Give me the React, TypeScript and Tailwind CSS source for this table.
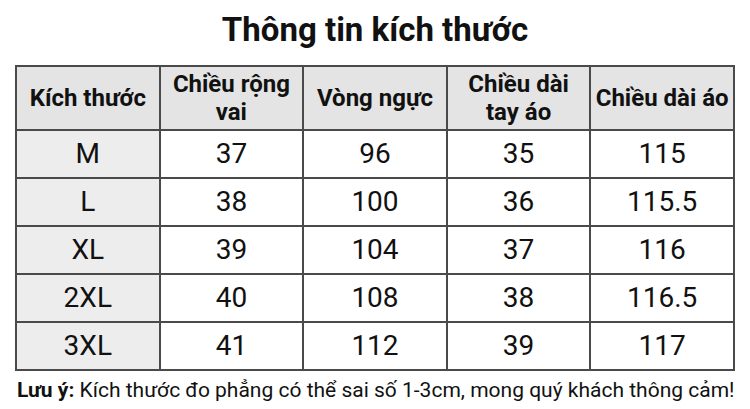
import React from "react";

const rows = [
  ["M", "37", "96", "35", "115"],
  ["L", "38", "100", "36", "115.5"],
  ["XL", "39", "104", "37", "116"],
  ["2XL", "40", "108", "38", "116.5"],
  ["3XL", "41", "112", "39", "117"],
];

const headers = ["Kích thước", "Chiều rộng\nvai", "Vòng ngực", "Chiều dài\ntay áo", "Chiều dài áo"];

export default function App() {
  return (
    <div
      className="w-[750px] h-[409px] bg-white text-[#111] overflow-hidden"
      style={{ fontFamily: "Roboto, 'Noto Sans', sans-serif" }}
    >
      <div className="h-[65px] flex justify-center pt-[10px]">
        <h1 className="text-[33px] font-bold leading-[40px]">Thông tin kích thước</h1>
      </div>
      <div className="px-[15px]">
        <table className="w-[720px] border-collapse table-fixed">
          <thead>
            <tr className="h-[64px] bg-[#e4e4e4]">
              {headers.map((h, i) => (
                <th
                  key={i}
                  className="border-2 border-[#4a4a4a] text-[24px] font-bold leading-[28px] whitespace-pre-line text-center align-middle p-0"
                >
                  {h}
                </th>
              ))}
            </tr>
          </thead>
          <tbody>
            {rows.map((r, ri) => (
              <tr key={ri} className="h-[48px]">
                {r.map((c, ci) => (
                  <td
                    key={ci}
                    className={`border-2 border-[#4a4a4a] text-[28px] leading-[32px] text-center align-middle p-0 ${
                      ci === 0 ? "bg-[#ededed]" : "bg-white"
                    }`}
                  >
                    {c}
                  </td>
                ))}
              </tr>
            ))}
          </tbody>
        </table>
      </div>
      <div className="pl-[17px] pt-[6px] text-[21px] leading-[26px] whitespace-nowrap">
        <span className="font-bold">Lưu ý:</span> Kích thước đo phẳng có thể sai số 1-3cm, mong quý khách thông cảm!
      </div>
    </div>
  );
}
